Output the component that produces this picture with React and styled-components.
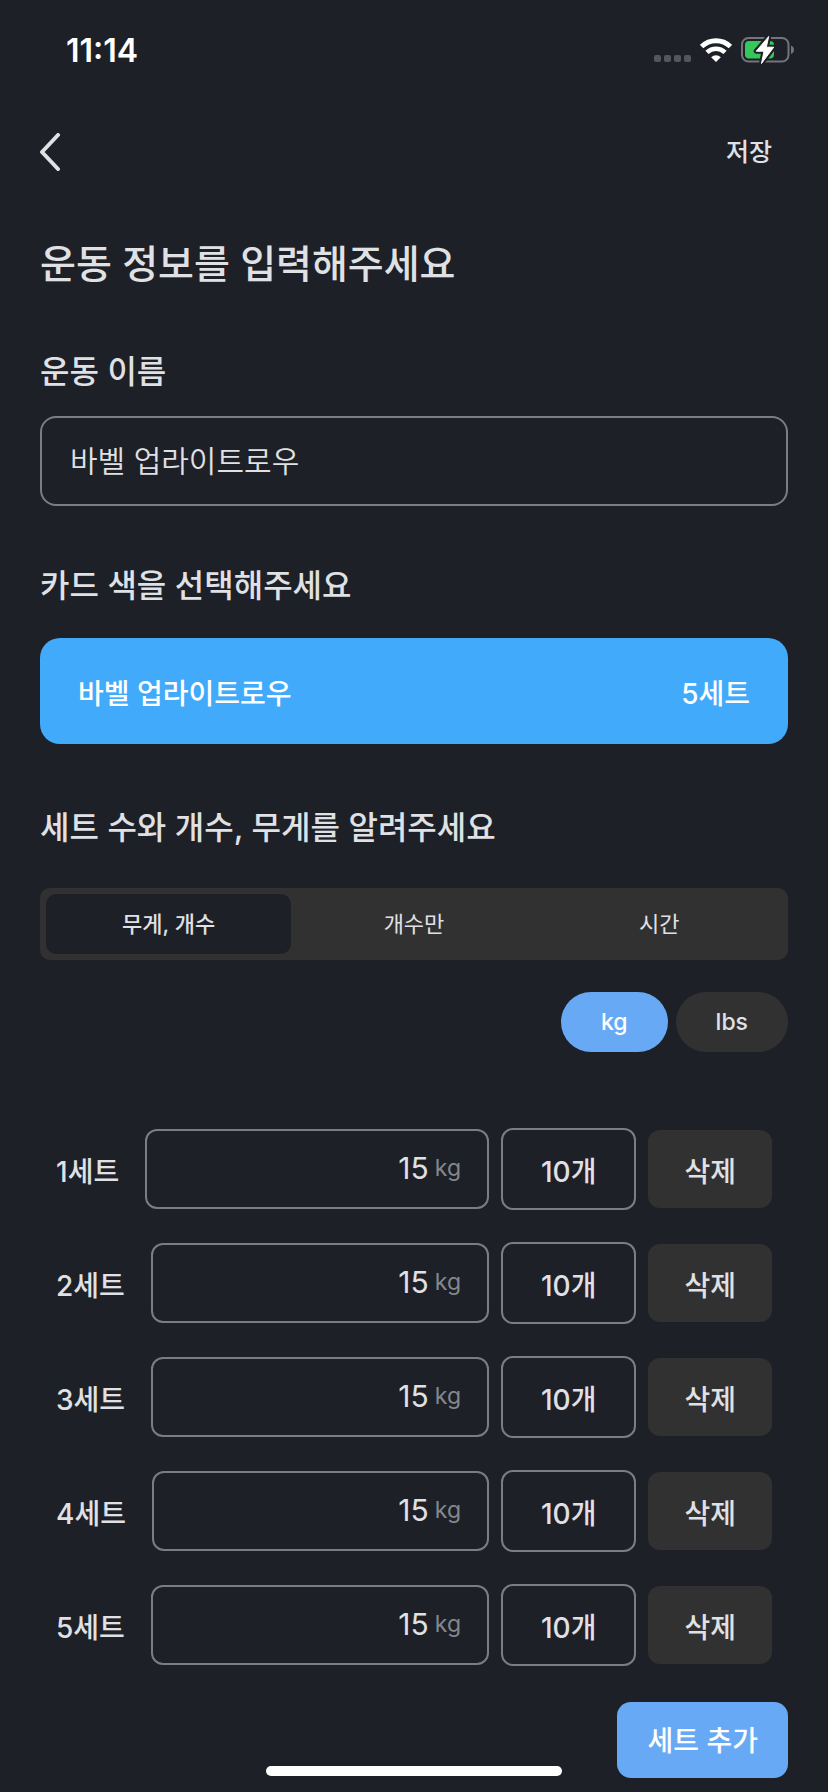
import React, { useState } from "react";
import styled, { createGlobalStyle } from "styled-components";

const color = {
  background: "#1d2027",
  surface: "#313132",
  line: "#7a7d85",
  text: "#e0e1e4",
  muted: "#85878d",
  primary: "#67a9f4",
  card: "#42aafa",
};

const GlobalStyle = createGlobalStyle`
  * {
    box-sizing: border-box;
  }
  body {
    margin: 0;
    background: ${color.background};
    color: ${color.text};
    font-family: Inter, "Noto Sans CJK KR", sans-serif;
    font-size: 28px;
  }
  button,
  input {
    margin: 0;
    border: none;
    background: none;
    color: inherit;
    font-family: inherit;
    font-size: inherit;
  }
  button {
    cursor: pointer;
    white-space: nowrap;
  }
`;

const Screen = styled.div`
  min-height: 100vh;
  padding-bottom: 14px;
`;

const StatusBar = styled.header`
  display: flex;
  align-items: center;
  justify-content: space-between;
  height: 100px;
  padding: 0 33px 0 66px;
`;

const Clock = styled.time`
  color: #fff;
  font-size: 32px;
  font-weight: 600;
`;

const StatusIcons = styled.div`
  display: flex;
  align-items: center;
  gap: 9px;
  svg {
    display: block;
  }
`;

const NavBar = styled.nav`
  display: flex;
  align-items: center;
  justify-content: space-between;
  height: 104px;
  padding: 0 40px;
`;

const BackButton = styled.button`
  padding: 0;
  svg {
    display: block;
  }
`;

const SaveButton = styled.button`
  padding: 14px 16px 18px;
  font-size: 25px;
  font-weight: 500;
`;

const Main = styled.main`
  padding: 0 40px;
`;

const Title = styled.h1`
  margin: 36px 0 0;
  font-size: 39px;
  font-weight: 500;
  line-height: 48px;
`;

const Section = styled.section`
  display: flex;
  flex-direction: column;
  gap: ${(props) => props.$gap}px;
  padding-top: ${(props) => props.$top}px;
`;

const SectionTitle = styled.h2`
  margin: 0;
  font-size: 32px;
  font-weight: 500;
  line-height: 40px;
`;

const NameInput = styled.input`
  width: 100%;
  height: 90px;
  padding: 0 28px 4px;
  border: 2px solid ${color.line};
  border-radius: 16px;
  font-size: 30px;
  font-weight: 350;
`;

const ColorCard = styled.button`
  display: flex;
  align-items: center;
  justify-content: space-between;
  height: 106px;
  padding: 2px 38px 0;
  border-radius: 20px;
  background: ${color.card};
  color: #fff;
  font-weight: 500;
`;

const Segments = styled.div`
  display: grid;
  grid-template-columns: repeat(3, 1fr);
  padding: 6px;
  border-radius: 10px;
  background: ${color.surface};
`;

const Segment = styled.button`
  height: 60px;
  padding: 0 0 4px;
  border-radius: 10px;
  background: ${(props) => (props.$active ? color.background : "transparent")};
  font-size: 22px;
  font-weight: ${(props) => (props.$active ? 500 : 400)};
`;

const Units = styled.div`
  display: flex;
  justify-content: flex-end;
  gap: 8px;
  padding-top: 32px;
`;

const UnitButton = styled.button`
  height: 60px;
  padding: 0 40px;
  border-radius: 30px;
  background: ${(props) => (props.$active ? color.primary : color.surface)};
  color: ${(props) => (props.$active ? "#fff" : color.text)};
  font-size: 23px;
  font-weight: 500;
`;

const SetList = styled.ul`
  display: flex;
  flex-direction: column;
  gap: 32px;
  margin: 0;
  padding: 76px 16px 36px;
  list-style: none;
`;

const SetRow = styled.li`
  display: flex;
  align-items: center;
  gap: 12px;
  height: 82px;
  font-weight: 500;
`;

const SetLabel = styled.label`
  margin-right: 14px;
  padding-top: 2px;
  white-space: nowrap;
`;

const WeightBox = styled.div`
  display: flex;
  flex: 1;
  align-items: center;
  gap: 6px;
  min-width: 0;
  height: 80px;
  padding: 0 26px 2px 20px;
  border: 2px solid ${color.line};
  border-radius: 12px;
  font-weight: 400;
`;

const WeightInput = styled.input`
  flex: 1;
  min-width: 0;
  padding: 0;
  font-size: 30px;
  text-align: right;
`;

const Suffix = styled.span`
  color: ${color.muted};
  font-size: 23px;
`;

const CountButton = styled.button`
  height: 82px;
  padding: 2px 38px 0;
  border: 2px solid ${color.line};
  border-radius: 12px;
  font-weight: 500;
`;

const DeleteButton = styled.button`
  height: 78px;
  padding: 2px 36px 0;
  border-radius: 12px;
  background: ${color.surface};
  font-weight: 500;
`;

const Footer = styled.footer`
  display: flex;
  justify-content: flex-end;
`;

const AddButton = styled.button`
  height: 76px;
  padding: 0 30px 2px;
  border-radius: 14px;
  background: ${color.primary};
  color: #fff;
  font-weight: 500;
`;

// floats over the page at the bottom of the screen
const HomeIndicator = styled.div`
  position: fixed;
  bottom: 16px;
  left: 50%;
  width: 296px;
  height: 10px;
  margin-left: -148px;
  border-radius: 5px;
  background: #fff;
`;

function SignalIcon() {
  return (
    <svg width="37" height="24" viewBox="0 0 37 24" fill="#54565c">
      <rect x="0" y="17" width="7" height="7" rx="2" />
      <rect x="10" y="17" width="7" height="7" rx="2" />
      <rect x="20" y="17" width="7" height="7" rx="2" />
      <rect x="30" y="17" width="7" height="7" rx="2" />
    </svg>
  );
}

function WifiIcon() {
  return (
    <svg width="32" height="24" viewBox="0 0 32 24" fill="none">
      <path d="M1.6 8.6A20.6 20.6 0 0 1 30.4 8.6" stroke="#fff" strokeWidth="4.8" />
      <path d="M7 14.4A12.8 12.8 0 0 1 25 14.4" stroke="#fff" strokeWidth="4.6" />
      <path d="M11.2 19.2A7 7 0 0 1 20.8 19.2L16 24Z" fill="#fff" />
    </svg>
  );
}

function BatteryIcon() {
  const bolt = "M27.7 1.5L15.2 16.2H23L20.5 28.5L32.7 12.2H25.3Z";
  return (
    <svg width="54" height="30" viewBox="0 0 54 30" fill="none">
      <rect x="1" y="3" width="46.5" height="23.5" rx="6.5" stroke="#73757a" strokeWidth="2" />
      <path d="M50 10.5C52 11.4 53 12.9 53 14.7S52 18 50 18.9Z" fill="#73757a" />
      <rect x="4" y="6" width="29" height="17.5" rx="4" fill="#35c759" />
      <path d={bolt} fill={color.background} stroke={color.background} strokeWidth="5" strokeLinejoin="round" />
      <path d={bolt} fill="#fff" stroke="#fff" strokeWidth="1" strokeLinejoin="round" />
    </svg>
  );
}

function BackIcon() {
  return (
    <svg width="20" height="38" viewBox="0 0 20 38" fill="none">
      <path
        d="M18 2L2 19L18 36"
        stroke={color.text}
        strokeWidth="4"
        strokeLinecap="round"
        strokeLinejoin="round"
      />
    </svg>
  );
}

const modes = ["무게, 개수", "개수만", "시간"];
const units = ["kg", "lbs"];

export default function App() {
  const [name, setName] = useState("바벨 업라이트로우");
  const [mode, setMode] = useState(modes[0]);
  const [unit, setUnit] = useState("kg");
  const [sets, setSets] = useState(
    [1, 2, 3, 4, 5].map((id) => ({ id, weight: "15", count: 10 }))
  );

  const changeWeight = (id, weight) =>
    setSets(sets.map((set) => (set.id === id ? { ...set, weight } : set)));
  const deleteSet = (id) => setSets(sets.filter((set) => set.id !== id));
  const addSet = () =>
    setSets([...sets, { id: Date.now(), weight: "15", count: 10 }]);

  return (
    <Screen>
      <GlobalStyle />
      <StatusBar>
        <Clock>11:14</Clock>
        <StatusIcons>
          <SignalIcon />
          <WifiIcon />
          <BatteryIcon />
        </StatusIcons>
      </StatusBar>
      <NavBar>
        <BackButton aria-label="뒤로">
          <BackIcon />
        </BackButton>
        <SaveButton>저장</SaveButton>
      </NavBar>
      <Main>
        <Title>운동 정보를 입력해주세요</Title>
        <Section $top={64} $gap={24}>
          <SectionTitle as="label" htmlFor="name">
            운동 이름
          </SectionTitle>
          <NameInput
            id="name"
            type="text"
            value={name}
            onChange={(e) => setName(e.target.value)}
          />
        </Section>
        <Section $top={60} $gap={32}>
          <SectionTitle>카드 색을 선택해주세요</SectionTitle>
          <ColorCard>
            <span>{name}</span>
            <span>{sets.length}세트</span>
          </ColorCard>
        </Section>
        <Section $top={64} $gap={40}>
          <SectionTitle>세트 수와 개수, 무게를 알려주세요</SectionTitle>
          <Segments>
            {modes.map((item) => (
              <Segment
                key={item}
                $active={item === mode}
                aria-pressed={item === mode}
                onClick={() => setMode(item)}
              >
                {item}
              </Segment>
            ))}
          </Segments>
        </Section>
        <Units>
          {units.map((item) => (
            <UnitButton
              key={item}
              $active={item === unit}
              aria-pressed={item === unit}
              onClick={() => setUnit(item)}
            >
              {item}
            </UnitButton>
          ))}
        </Units>
        <SetList>
          {sets.map((set, index) => (
            <SetRow key={set.id}>
              <SetLabel htmlFor={`weight-${set.id}`}>{index + 1}세트</SetLabel>
              <WeightBox>
                <WeightInput
                  id={`weight-${set.id}`}
                  type="text"
                  inputMode="decimal"
                  value={set.weight}
                  onChange={(e) => changeWeight(set.id, e.target.value)}
                />
                <Suffix>{unit}</Suffix>
              </WeightBox>
              <CountButton>{set.count}개</CountButton>
              <DeleteButton onClick={() => deleteSet(set.id)}>삭제</DeleteButton>
            </SetRow>
          ))}
        </SetList>
        <Footer>
          <AddButton onClick={addSet}>세트 추가</AddButton>
        </Footer>
      </Main>
      <HomeIndicator />
    </Screen>
  );
}
